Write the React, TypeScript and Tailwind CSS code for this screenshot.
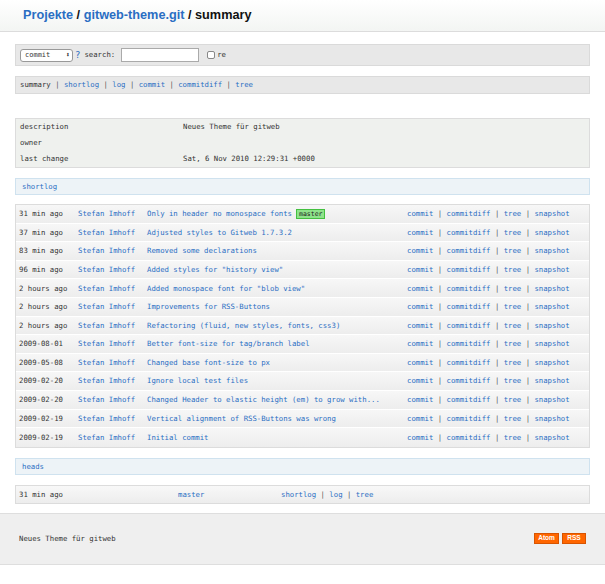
import React from "react";

const mono = { fontFamily: '"DejaVu Sans Mono", "Liberation Mono", monospace' };

const commits = [
  ["31 min ago", "Only in header no monospace fonts", true],
  ["37 min ago", "Adjusted styles to Gitweb 1.7.3.2", false],
  ["83 min ago", "Removed some declarations", false],
  ["96 min ago", 'Added styles for "history view"', false],
  ["2 hours ago", 'Added monospace font for "blob view"', false],
  ["2 hours ago", "Improvements for RSS-Buttons", false],
  ["2 hours ago", "Refactoring (fluid, new styles, fonts, css3)", false],
  ["2009-08-01", "Better font-size for tag/branch label", false],
  ["2009-05-08", "Changed base font-size to px", false],
  ["2009-02-20", "Ignore local test files", false],
  ["2009-02-20", "Changed Header to elastic height (em) to grow with...", false],
  ["2009-02-19", "Vertical alignment of RSS-Buttons was wrong", false],
  ["2009-02-19", "Initial commit", false],
] as const;

function Sep() {
  return <span className="whitespace-pre text-[#555]"> | </span>;
}

function Links({ items }: { items: string[] }) {
  return (
    <span>
      {items.map((l, i) => (
        <React.Fragment key={l}>
          {i > 0 && <Sep />}
          <a className="text-[#2a6ec3]">{l}</a>
        </React.Fragment>
      ))}
    </span>
  );
}

function SectionTitle({ children }: { children: string }) {
  return (
    <div className="h-[17px] flex items-center pl-[6px] bg-[#edf3f7] border border-[#cfe2ef] text-[#2a6ec3]">
      {children}
    </div>
  );
}

export default function App() {
  return (
    <div className="w-[605px] h-[584px] bg-white text-[#333] text-[7.3px] leading-none" style={mono}>
      <div className="h-[32px] flex items-center pl-[23px] bg-gradient-to-b from-white to-[#f3f5f3] border-b border-[#dcdcdc]">
        <h1
          className="text-[12.7px] font-bold text-[#111]"
          style={{ fontFamily: '"Liberation Sans", Arial, sans-serif' }}
        >
          <span className="text-[#2a6ec3]">Projekte</span> /{" "}
          <span className="text-[#2a6ec3]">gitweb-theme.git</span> / summary
        </h1>
      </div>

      <div className="px-[15px]">
        <div className="mt-[12px] h-[22px] flex items-center pl-[4px] bg-[#e8e8e8] border border-[#dadada]">
          <div className="w-[53px] h-[13px] flex items-center justify-between pl-[4px] pr-[2px] bg-white border border-[#999] rounded-[3px] text-[7px]">
            <span>commit</span>
            <span className="text-[7px]">⬍</span>
          </div>
          <span className="ml-[2px] text-[#2a6ec3] text-[9px]">?</span>
          <span className="ml-[4px]">search:</span>
          <div className="ml-[6px] w-[78px] h-[14px] bg-white border border-[#aaa]" />
          <div className="ml-[8px] w-[8px] h-[8px] border border-[#888] rounded-[2px] bg-white" />
          <span className="ml-[2px]">re</span>
        </div>

        <div className="mt-[10px] h-[18px] flex items-center pl-[4px] bg-[#e8e8e8] border border-[#dadada]">
          <span>summary</span>
          <Sep />
          <Links items={["shortlog", "log", "commit", "commitdiff", "tree"]} />
        </div>

        <div className="mt-[24px] bg-[#eff1ee] border border-[#dcdcdc]">
          {[
            ["description", "Neues Theme für gitweb"],
            ["owner", ""],
            ["last change", "Sat, 6 Nov 2010 12:29:31 +0000"],
          ].map(([k, v]) => (
            <div key={k} className="h-[16px] flex items-center pl-[4px]">
              <span className="w-[163px]">{k}</span>
              <span>{v}</span>
            </div>
          ))}
        </div>

        <div className="mt-[10px]">
          <SectionTitle>shortlog</SectionTitle>
        </div>

        <div className="mt-[9px] border border-[#dcdcdc]">
          {commits.map(([date, msg, head], i) => (
            <div
              key={i}
              className="h-[18.6px] flex items-center pl-[3px] bg-gradient-to-b from-[#f7f7f7] to-[#ededed] border-b border-white last:border-b-0"
            >
              <span className="w-[59px] shrink-0">{date}</span>
              <a className="w-[69px] shrink-0 text-[#2a6ec3]">Stefan Imhoff</a>
              <span className="w-[260px] shrink-0 flex items-center">
                <a className="text-[#2a6ec3]">{msg}</a>
                {head && (
                  <span className="ml-[4px] px-[2px] h-[10px] flex items-center bg-[#8ee38a] border border-[#44c040] text-[#222] text-[6.5px]">
                    master
                  </span>
                )}
              </span>
              <Links items={["commit", "commitdiff", "tree", "snapshot"]} />
            </div>
          ))}
        </div>

        <div className="mt-[10px]">
          <SectionTitle>heads</SectionTitle>
        </div>

        <div className="mt-[10px] h-[19px] flex items-center pl-[3px] bg-gradient-to-b from-[#f8f8f8] to-[#ededed] border border-[#dcdcdc]">
          <span className="w-[159px]">31 min ago</span>
          <a className="w-[103px] text-[#2a6ec3]">master</a>
          <Links items={["shortlog", "log", "tree"]} />
        </div>
      </div>

      <div className="mt-[9px] h-[52px] flex items-center justify-between pl-[19px] pr-[19px] bg-[#efefef] border-y border-[#dedede]">
        <span>Neues Theme für gitweb</span>
        <div className="flex gap-[3px]" style={{ fontFamily: '"Liberation Sans", Arial, sans-serif' }}>
          <span className="w-[25px] h-[11px] flex items-center justify-center bg-[#ff6600] text-white text-[6.5px] font-bold border border-[#d85400]">
            Atom
          </span>
          <span className="w-[24px] h-[11px] flex items-center justify-center bg-[#ff6600] text-white text-[6.5px] font-bold border border-[#d85400]">
            RSS
          </span>
        </div>
      </div>
    </div>
  );
}
